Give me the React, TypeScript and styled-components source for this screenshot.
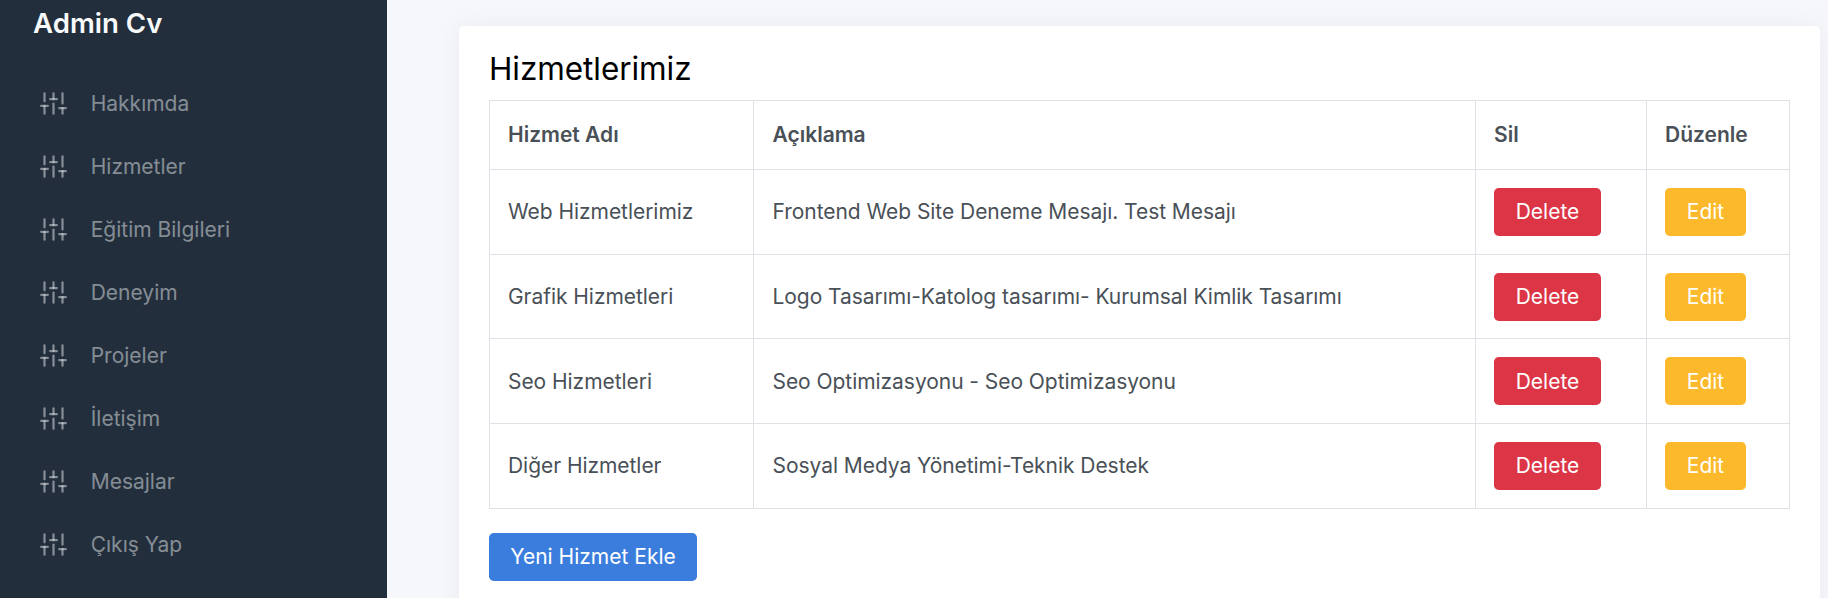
import React from "react";
import styled, { createGlobalStyle } from "styled-components";

const GlobalStyle = createGlobalStyle`
  *, *::before, *::after { box-sizing: border-box; }
  html, body { margin: 0; padding: 0; }
  body {
    background: #f5f7fb;
    color: #495057;
    font-family: Inter, "Liberation Sans", sans-serif;
    font-size: 21px;
    line-height: 31.5px;
    overflow: hidden;
  }
`;

const Layout = styled.div`
  display: flex;
  height: 598px;
  overflow: hidden;
`;

const Sidebar = styled.aside`
  flex: 0 0 387px;
  background: #222e3c;
`;

const Brand = styled.a`
  display: block;
  height: 72px;
  padding: 3px 33px 0;
  color: #f8f9fa;
  font-size: 27.6px;
  font-weight: 600;
  line-height: 41px;
`;

const Nav = styled.ul`
  list-style: none;
  margin: 0;
  padding: 0;
`;

const NavLink = styled.a`
  display: flex;
  align-items: center;
  height: 63px;
  padding-left: 40px;
  gap: 23.7px;
  color: rgba(233, 236, 239, 0.5);
`;

const Icon = styled.svg`
  width: 27px;
  height: 27px;
  fill: none;
  stroke: currentColor;
  stroke-width: 2;
  stroke-linecap: round;
  stroke-linejoin: round;
`;

const Main = styled.main`
  flex: 1;
  min-width: 0;
  padding: 26px 8px 0 72px;
`;

const Card = styled.section`
  height: 640px;
  padding: 25px 30px 30px;
  background: #fff;
  border-radius: 5px;
  box-shadow: 0 0 26px rgba(33, 37, 41, 0.05);
`;

const Heading = styled.h1`
  height: 49px;
  margin: 0;
  color: #000;
  font-size: 31.5px;
  font-weight: 400;
  letter-spacing: -0.06px;
  line-height: 36px;
`;

const Table = styled.table`
  width: 1301px;
  table-layout: fixed;
  border-collapse: collapse;
`;

const HeadCell = styled.th<{ $width: number }>`
  width: ${(p) => p.$width}px;
  height: 69px;
  padding: 0 18px;
  border: 1px solid #dee2e6;
  font-weight: 600;
  text-align: left;

  &:nth-child(2) { padding-left: 18.5px; }
`;

const Cell = styled.td`
  height: 84.67px;
  padding: 0.7px 18px 0;
  border: 1px solid #dee2e6;
  letter-spacing: -0.05px;
  vertical-align: middle;

  &:nth-child(2) { padding-left: 18.5px; }
`;

const tones = { danger: "#dc3545", warning: "#fcb92c", primary: "#3b7ddd" };

const Button = styled.button<{ $tone: keyof typeof tones; $width: number }>`
  display: block;
  width: ${(p) => p.$width}px;
  height: 48px;
  padding: 0;
  border: 0;
  border-radius: 4.8px;
  background: ${(p) => tones[p.$tone]};
  color: #fff;
  font: inherit;
  text-align: center;
`;

const Footer = styled.div`
  padding-top: 24px;
`;

const Sliders = () => (
  <Icon viewBox="0 0 24 24">
    <line x1="4" y1="21" x2="4" y2="14" />
    <line x1="4" y1="10" x2="4" y2="3" />
    <line x1="12" y1="21" x2="12" y2="12" />
    <line x1="12" y1="8" x2="12" y2="3" />
    <line x1="20" y1="21" x2="20" y2="16" />
    <line x1="20" y1="12" x2="20" y2="3" />
    <line x1="1" y1="14" x2="7" y2="14" />
    <line x1="9" y1="8" x2="15" y2="8" />
    <line x1="17" y1="16" x2="23" y2="16" />
  </Icon>
);

const links = ["Hakkımda", "Hizmetler", "Eğitim Bilgileri", "Deneyim", "Projeler", "İletişim", "Mesajlar", "Çıkış Yap"];

const columns = [
  { label: "Hizmet Adı", width: 264 },
  { label: "Açıklama", width: 722 },
  { label: "Sil", width: 171 },
  { label: "Düzenle", width: 143 },
];

const services = [
  ["Web Hizmetlerimiz", "Frontend Web Site Deneme Mesajı. Test Mesajı"],
  ["Grafik Hizmetleri", "Logo Tasarımı-Katolog tasarımı- Kurumsal Kimlik Tasarımı"],
  ["Seo Hizmetleri", "Seo Optimizasyonu - Seo Optimizasyonu"],
  ["Diğer Hizmetler", "Sosyal Medya Yönetimi-Teknik Destek"],
];

export default function App() {
  return (
    <>
      <GlobalStyle />
      <Layout>
        <Sidebar>
          <Brand>Admin Cv</Brand>
          <Nav>
            {links.map((label) => (
              <li key={label}>
                <NavLink>
                  <Sliders />
                  <span>{label}</span>
                </NavLink>
              </li>
            ))}
          </Nav>
        </Sidebar>
        <Main>
          <Card>
            <Heading>Hizmetlerimiz</Heading>
            <Table>
              <thead>
                <tr>
                  {columns.map((c) => (
                    <HeadCell key={c.label} $width={c.width}>{c.label}</HeadCell>
                  ))}
                </tr>
              </thead>
              <tbody>
                {services.map(([name, description]) => (
                  <tr key={name}>
                    <Cell>{name}</Cell>
                    <Cell>{description}</Cell>
                    <Cell><Button $tone="danger" $width={107}>Delete</Button></Cell>
                    <Cell><Button $tone="warning" $width={81}>Edit</Button></Cell>
                  </tr>
                ))}
              </tbody>
            </Table>
            <Footer>
              <Button $tone="primary" $width={208}>Yeni Hizmet Ekle</Button>
            </Footer>
          </Card>
        </Main>
      </Layout>
    </>
  );
}
